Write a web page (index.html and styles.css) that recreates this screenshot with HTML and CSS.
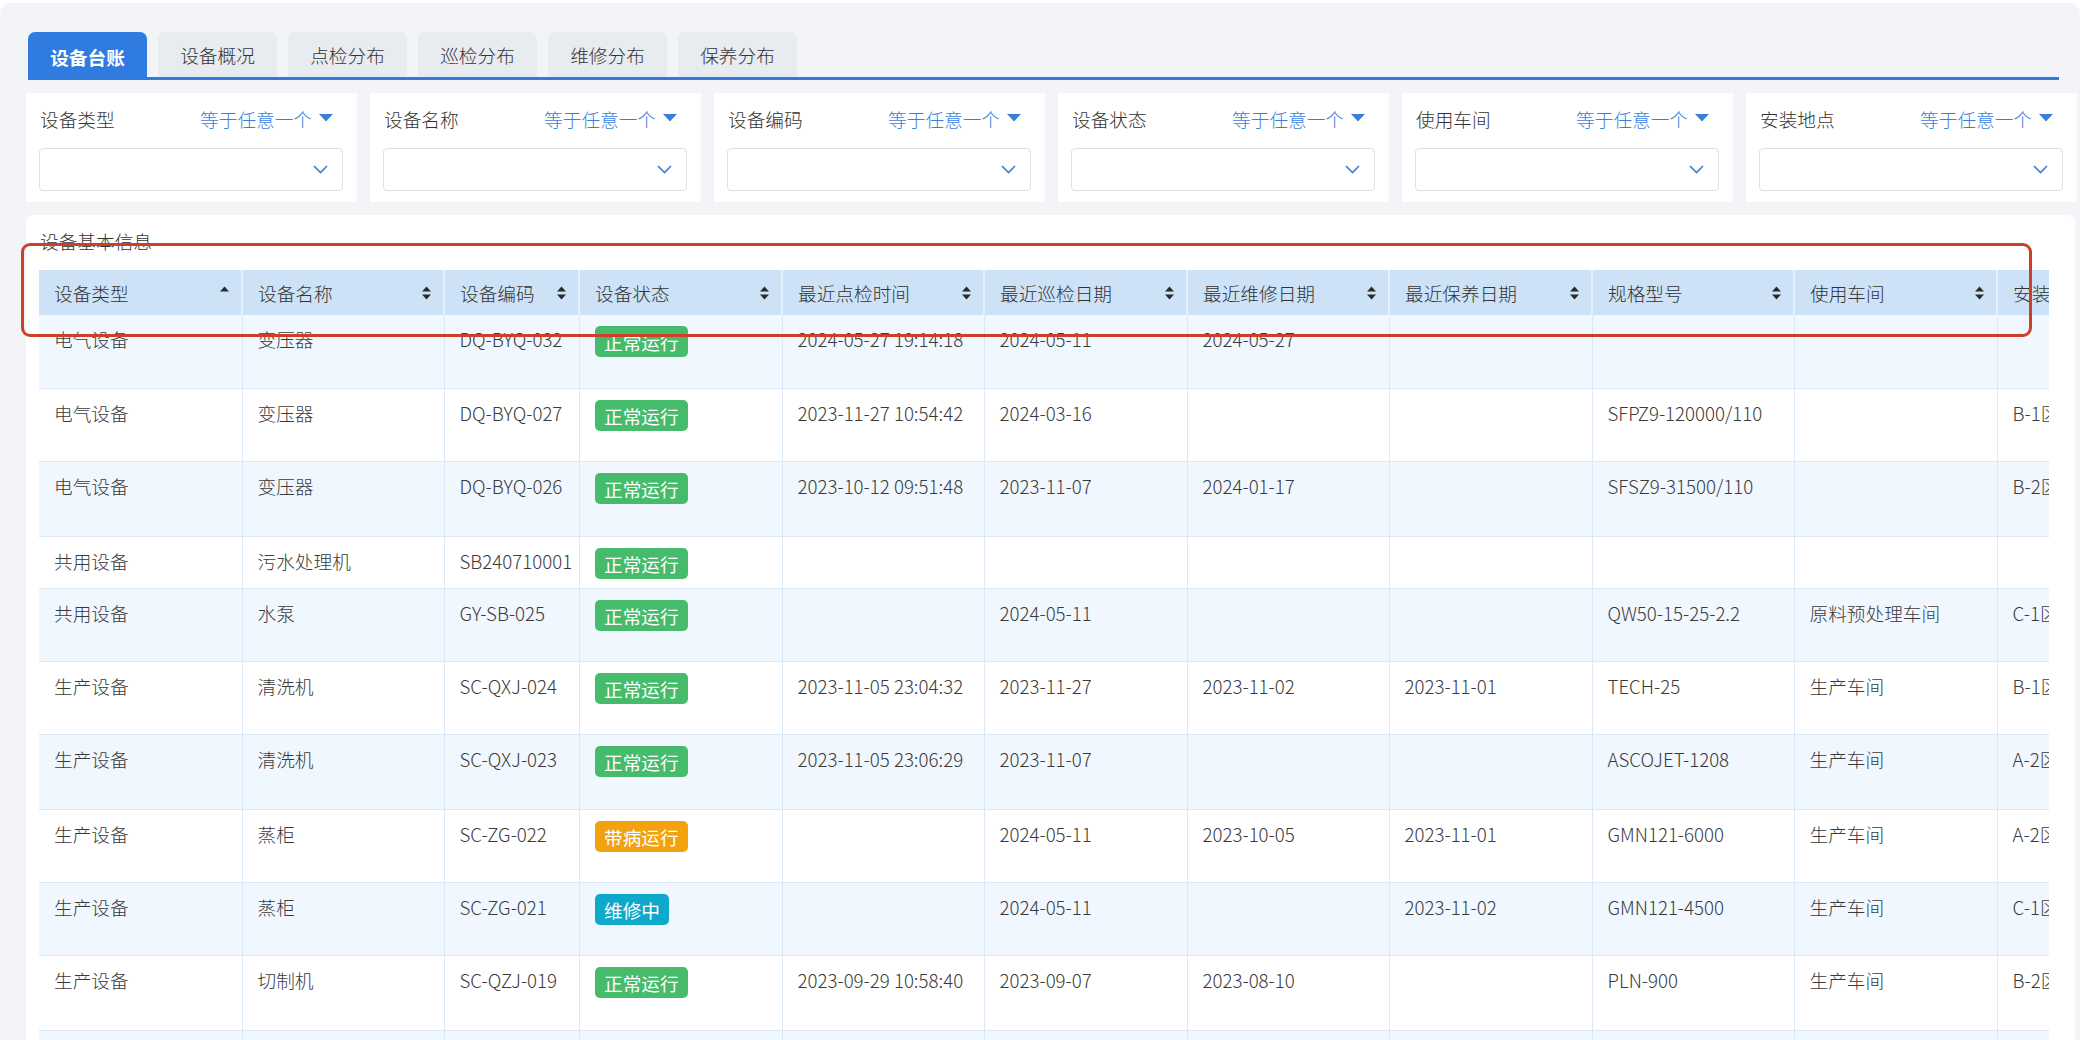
FILE: index.html
```html
<!DOCTYPE html>
<html lang="zh-CN">
<head>
<meta charset="utf-8">
<title>设备台账</title>
<link rel="stylesheet" href="styles.css">
</head>
<body>
<div class="frame">
  <div class="tabs">
    <div class="tab active">设备台账</div>
    <div class="tab">设备概况</div>
    <div class="tab">点检分布</div>
    <div class="tab">巡检分布</div>
    <div class="tab">维修分布</div>
    <div class="tab">保养分布</div>
  </div>

  <div class="filters">
    <div class="filter">
      <div class="filter-head"><span class="filter-label">设备类型</span><span class="filter-op">等于任意一个<svg class="caret" width="14" height="8" viewBox="0 0 14 8"><polygon points="0,0 14,0 7,7.5"/></svg></span></div>
      <div class="select"><svg class="chev" width="15" height="9" viewBox="0 0 15 9"><polyline points="1,1 7.5,7.5 14,1"/></svg></div>
    </div>
    <div class="filter">
      <div class="filter-head"><span class="filter-label">设备名称</span><span class="filter-op">等于任意一个<svg class="caret" width="14" height="8" viewBox="0 0 14 8"><polygon points="0,0 14,0 7,7.5"/></svg></span></div>
      <div class="select"><svg class="chev" width="15" height="9" viewBox="0 0 15 9"><polyline points="1,1 7.5,7.5 14,1"/></svg></div>
    </div>
    <div class="filter">
      <div class="filter-head"><span class="filter-label">设备编码</span><span class="filter-op">等于任意一个<svg class="caret" width="14" height="8" viewBox="0 0 14 8"><polygon points="0,0 14,0 7,7.5"/></svg></span></div>
      <div class="select"><svg class="chev" width="15" height="9" viewBox="0 0 15 9"><polyline points="1,1 7.5,7.5 14,1"/></svg></div>
    </div>
    <div class="filter">
      <div class="filter-head"><span class="filter-label">设备状态</span><span class="filter-op">等于任意一个<svg class="caret" width="14" height="8" viewBox="0 0 14 8"><polygon points="0,0 14,0 7,7.5"/></svg></span></div>
      <div class="select"><svg class="chev" width="15" height="9" viewBox="0 0 15 9"><polyline points="1,1 7.5,7.5 14,1"/></svg></div>
    </div>
    <div class="filter">
      <div class="filter-head"><span class="filter-label">使用车间</span><span class="filter-op">等于任意一个<svg class="caret" width="14" height="8" viewBox="0 0 14 8"><polygon points="0,0 14,0 7,7.5"/></svg></span></div>
      <div class="select"><svg class="chev" width="15" height="9" viewBox="0 0 15 9"><polyline points="1,1 7.5,7.5 14,1"/></svg></div>
    </div>
    <div class="filter">
      <div class="filter-head"><span class="filter-label">安装地点</span><span class="filter-op">等于任意一个<svg class="caret" width="14" height="8" viewBox="0 0 14 8"><polygon points="0,0 14,0 7,7.5"/></svg></span></div>
      <div class="select"><svg class="chev" width="15" height="9" viewBox="0 0 15 9"><polyline points="1,1 7.5,7.5 14,1"/></svg></div>
    </div>
  </div>

  <div class="card">
    <div class="card-title">设备基本信息</div>
    <div class="table-wrap">
      <table class="grid">
        <colgroup>
          <col class="w203"><col class="w202"><col class="w135"><col class="w203"><col class="w202"><col class="w203"><col class="w202"><col class="w203"><col class="w202"><col class="w203"><col class="w203">
        </colgroup>
        <thead>
          <tr>
            <th><div class="th">设备类型<svg class="sort" width="9" height="14" viewBox="0 0 9 14"><polygon points="0,5.5 4.5,0.5 9,5.5"/></svg></div></th>
            <th><div class="th">设备名称<svg class="sort" width="9" height="14" viewBox="0 0 9 14"><polygon points="0,5.5 4.5,0.5 9,5.5"/><polygon points="0,8.5 4.5,13.5 9,8.5"/></svg></div></th>
            <th><div class="th">设备编码<svg class="sort" width="9" height="14" viewBox="0 0 9 14"><polygon points="0,5.5 4.5,0.5 9,5.5"/><polygon points="0,8.5 4.5,13.5 9,8.5"/></svg></div></th>
            <th><div class="th">设备状态<svg class="sort" width="9" height="14" viewBox="0 0 9 14"><polygon points="0,5.5 4.5,0.5 9,5.5"/><polygon points="0,8.5 4.5,13.5 9,8.5"/></svg></div></th>
            <th><div class="th">最近点检时间<svg class="sort" width="9" height="14" viewBox="0 0 9 14"><polygon points="0,5.5 4.5,0.5 9,5.5"/><polygon points="0,8.5 4.5,13.5 9,8.5"/></svg></div></th>
            <th><div class="th">最近巡检日期<svg class="sort" width="9" height="14" viewBox="0 0 9 14"><polygon points="0,5.5 4.5,0.5 9,5.5"/><polygon points="0,8.5 4.5,13.5 9,8.5"/></svg></div></th>
            <th><div class="th">最近维修日期<svg class="sort" width="9" height="14" viewBox="0 0 9 14"><polygon points="0,5.5 4.5,0.5 9,5.5"/><polygon points="0,8.5 4.5,13.5 9,8.5"/></svg></div></th>
            <th><div class="th">最近保养日期<svg class="sort" width="9" height="14" viewBox="0 0 9 14"><polygon points="0,5.5 4.5,0.5 9,5.5"/><polygon points="0,8.5 4.5,13.5 9,8.5"/></svg></div></th>
            <th><div class="th">规格型号<svg class="sort" width="9" height="14" viewBox="0 0 9 14"><polygon points="0,5.5 4.5,0.5 9,5.5"/><polygon points="0,8.5 4.5,13.5 9,8.5"/></svg></div></th>
            <th><div class="th">使用车间<svg class="sort" width="9" height="14" viewBox="0 0 9 14"><polygon points="0,5.5 4.5,0.5 9,5.5"/><polygon points="0,8.5 4.5,13.5 9,8.5"/></svg></div></th>
            <th><div class="th">安装地点<svg class="sort" width="9" height="14" viewBox="0 0 9 14"><polygon points="0,5.5 4.5,0.5 9,5.5"/><polygon points="0,8.5 4.5,13.5 9,8.5"/></svg></div></th>
          </tr>
        </thead>
        <tbody>
          <tr class="r73"><td>电气设备</td><td>变压器</td><td>DQ-BYQ-032</td><td><span class="badge ok">正常运行</span></td><td>2024-05-27 19:14:18</td><td>2024-05-11</td><td>2024-05-27</td><td></td><td></td><td></td><td></td></tr>
          <tr class="r73"><td>电气设备</td><td>变压器</td><td>DQ-BYQ-027</td><td><span class="badge ok">正常运行</span></td><td>2023-11-27 10:54:42</td><td>2024-03-16</td><td></td><td></td><td>SFPZ9-120000/110</td><td></td><td>B-1区</td></tr>
          <tr class="r75"><td>电气设备</td><td>变压器</td><td>DQ-BYQ-026</td><td><span class="badge ok">正常运行</span></td><td>2023-10-12 09:51:48</td><td>2023-11-07</td><td>2024-01-17</td><td></td><td>SFSZ9-31500/110</td><td></td><td>B-2区</td></tr>
          <tr class="r52"><td>共用设备</td><td>污水处理机</td><td>SB240710001</td><td><span class="badge ok">正常运行</span></td><td></td><td></td><td></td><td></td><td></td><td></td><td></td></tr>
          <tr class="r73"><td>共用设备</td><td>水泵</td><td>GY-SB-025</td><td><span class="badge ok">正常运行</span></td><td></td><td>2024-05-11</td><td></td><td></td><td>QW50-15-25-2.2</td><td>原料预处理车间</td><td>C-1区</td></tr>
          <tr class="r73"><td>生产设备</td><td>清洗机</td><td>SC-QXJ-024</td><td><span class="badge ok">正常运行</span></td><td>2023-11-05 23:04:32</td><td>2023-11-27</td><td>2023-11-02</td><td>2023-11-01</td><td>TECH-25</td><td>生产车间</td><td>B-1区</td></tr>
          <tr class="r75"><td>生产设备</td><td>清洗机</td><td>SC-QXJ-023</td><td><span class="badge ok">正常运行</span></td><td>2023-11-05 23:06:29</td><td>2023-11-07</td><td></td><td></td><td>ASCOJET-1208</td><td>生产车间</td><td>A-2区</td></tr>
          <tr class="r73"><td>生产设备</td><td>蒸柜</td><td>SC-ZG-022</td><td><span class="badge warn">带病运行</span></td><td></td><td>2024-05-11</td><td>2023-10-05</td><td>2023-11-01</td><td>GMN121-6000</td><td>生产车间</td><td>A-2区</td></tr>
          <tr class="r73"><td>生产设备</td><td>蒸柜</td><td>SC-ZG-021</td><td><span class="badge fix">维修中</span></td><td></td><td>2024-05-11</td><td></td><td>2023-11-02</td><td>GMN121-4500</td><td>生产车间</td><td>C-1区</td></tr>
          <tr class="r75"><td>生产设备</td><td>切制机</td><td>SC-QZJ-019</td><td><span class="badge ok">正常运行</span></td><td>2023-09-29 10:58:40</td><td>2023-09-07</td><td>2023-08-10</td><td></td><td>PLN-900</td><td>生产车间</td><td>B-2区</td></tr>
          <tr class="r73"><td>生产设备</td><td>切制机</td><td>SC-QZJ-018</td><td><span class="badge ok">正常运行</span></td><td></td><td>2023-09-07</td><td></td><td></td><td>PLN-600</td><td>生产车间</td><td>B-2区</td></tr>
        </tbody>
      </table>
    </div>
  </div>
</div>
<div class="annot"></div>
</body>
</html>
```

FILE: styles.css
```css
html, body {
  margin: 0;
  padding: 0;
  background: #ffffff;
  height: 1040px;
  overflow: hidden;
}
body {
  font-family: "Liberation Sans Narrow", "Noto Sans CJK SC", "Noto Sans", sans-serif;
  font-size: 18.67px;
  font-weight: 300;
  color: #333;
  position: relative;
}
.frame {
  margin: 3px 8px 0 0;
  height: 1037px;
  box-sizing: border-box;
  background: #f2f4f7;
  border-radius: 10px 10px 0 0;
  padding: 29px 5px 0 26px;
}

/* tabs */
.tabs {
  display: flex;
  gap: 11px;
  margin: 0 16px 0 2px;
  border-bottom: 3px solid #2f7be0;
  height: 45px;
}
.tab {
  width: 119px;
  height: 45px;
  box-sizing: border-box;
  background: #e8ebf0;
  border-radius: 7px 7px 0 0;
  display: flex;
  align-items: center;
  justify-content: center;
  font-family: "Noto Sans CJK SC", sans-serif;
  color: #333;
}
.tab.active {
  background: #2f7be0;
  color: #fff;
  font-weight: 700;
  height: 48px;
}

/* filters */
.filters {
  display: grid;
  grid-template-columns: repeat(6, 331px);
  gap: 13px;
  margin-top: 13px;
  width: 2051px;
}
.filter {
  background: #fff;
  height: 109px;
  box-sizing: border-box;
  padding: 11px 14px 11px 13px;
  display: flex;
  flex-direction: column;
  gap: 16px;
}
.filter-head {
  display: flex;
  justify-content: space-between;
  align-items: center;
  height: 28px;
  padding: 0 10px 0 1px;
  font-family: "Noto Sans CJK SC", sans-serif;
}
.filter-label { color: #333; }
.filter-op {
  color: #3a7fdc;
  display: flex;
  align-items: center;
  gap: 7px;
}
.caret { fill: #3a7fdc; }
.select {
  height: 43px;
  box-sizing: border-box;
  border: 1px solid #dcdfe6;
  border-radius: 4px;
  display: flex;
  align-items: center;
  justify-content: flex-end;
  padding-right: 14px;
}
.chev {
  fill: none;
  stroke: #3a7fdc;
  stroke-width: 1.7;
}

/* card */
.card {
  margin-top: 13px;
  background: #fff;
  border-radius: 7px 7px 0 0;
  padding: 12px 26px 0 13px;
  height: 900px;
  box-sizing: border-box;
}
.card-title {
  font-family: "Noto Sans CJK SC", sans-serif;
  line-height: 28px;
  height: 28px;
  padding-left: 1px;
  margin-bottom: 15px;
  color: #333;
}
.table-wrap {
  width: 2010px;
  overflow: hidden;
}
.grid {
  table-layout: fixed;
  width: 2161px;
  border-collapse: collapse;
}
.w203 { width: 203px; }
.w202 { width: 202px; }
.w135 { width: 135px; }

.grid th {
  background: #cde2f7;
  height: 45px;
  padding: 0 12px 0 15px;
  font-weight: 300;
  text-align: left;
  color: #333;
  border-right: 2px solid #e6f0fa;
  white-space: nowrap;
  overflow: hidden;
}
.th {
  display: flex;
  justify-content: space-between;
  align-items: center;
  font-family: "Noto Sans CJK SC", sans-serif;
}
.sort { fill: #2b2b2b; flex: none; }

.grid td {
  vertical-align: top;
  padding: 8px 15px 0;
  line-height: 31px;
  color: #3a3a3a;
  border-right: 1px solid #dbe8f5;
  border-bottom: 1px solid #dbe8f5;
  white-space: nowrap;
  overflow: hidden;
}
.grid tbody tr:nth-child(odd) td { background: #f0f7fe; }
.grid tbody tr:nth-child(even) td { background: #ffffff; }
.grid tr.r73 { height: 73px; }
.grid tr.r75 { height: 75px; }
.grid tr.r52 { height: 52px; }

.badge {
  display: inline-block;
  height: 31px;
  line-height: 31px;
  margin-top: 3px;
  padding: 0 9.5px;
  border-radius: 5px;
  color: #fff;
  font-family: "Noto Sans CJK SC", sans-serif;
  font-weight: 400;
  vertical-align: top;
}
.badge.ok { background: #45bb6b; }
.badge.warn { background: #f2a20e; }
.badge.fix { background: #0ea8cb; }

/* red annotation overlay */
.annot {
  position: absolute;
  left: 21px;
  top: 243px;
  width: 2011px;
  height: 94px;
  box-sizing: border-box;
  border: 3px solid #cc4125;
  border-radius: 9px;
  pointer-events: none;
}
```
